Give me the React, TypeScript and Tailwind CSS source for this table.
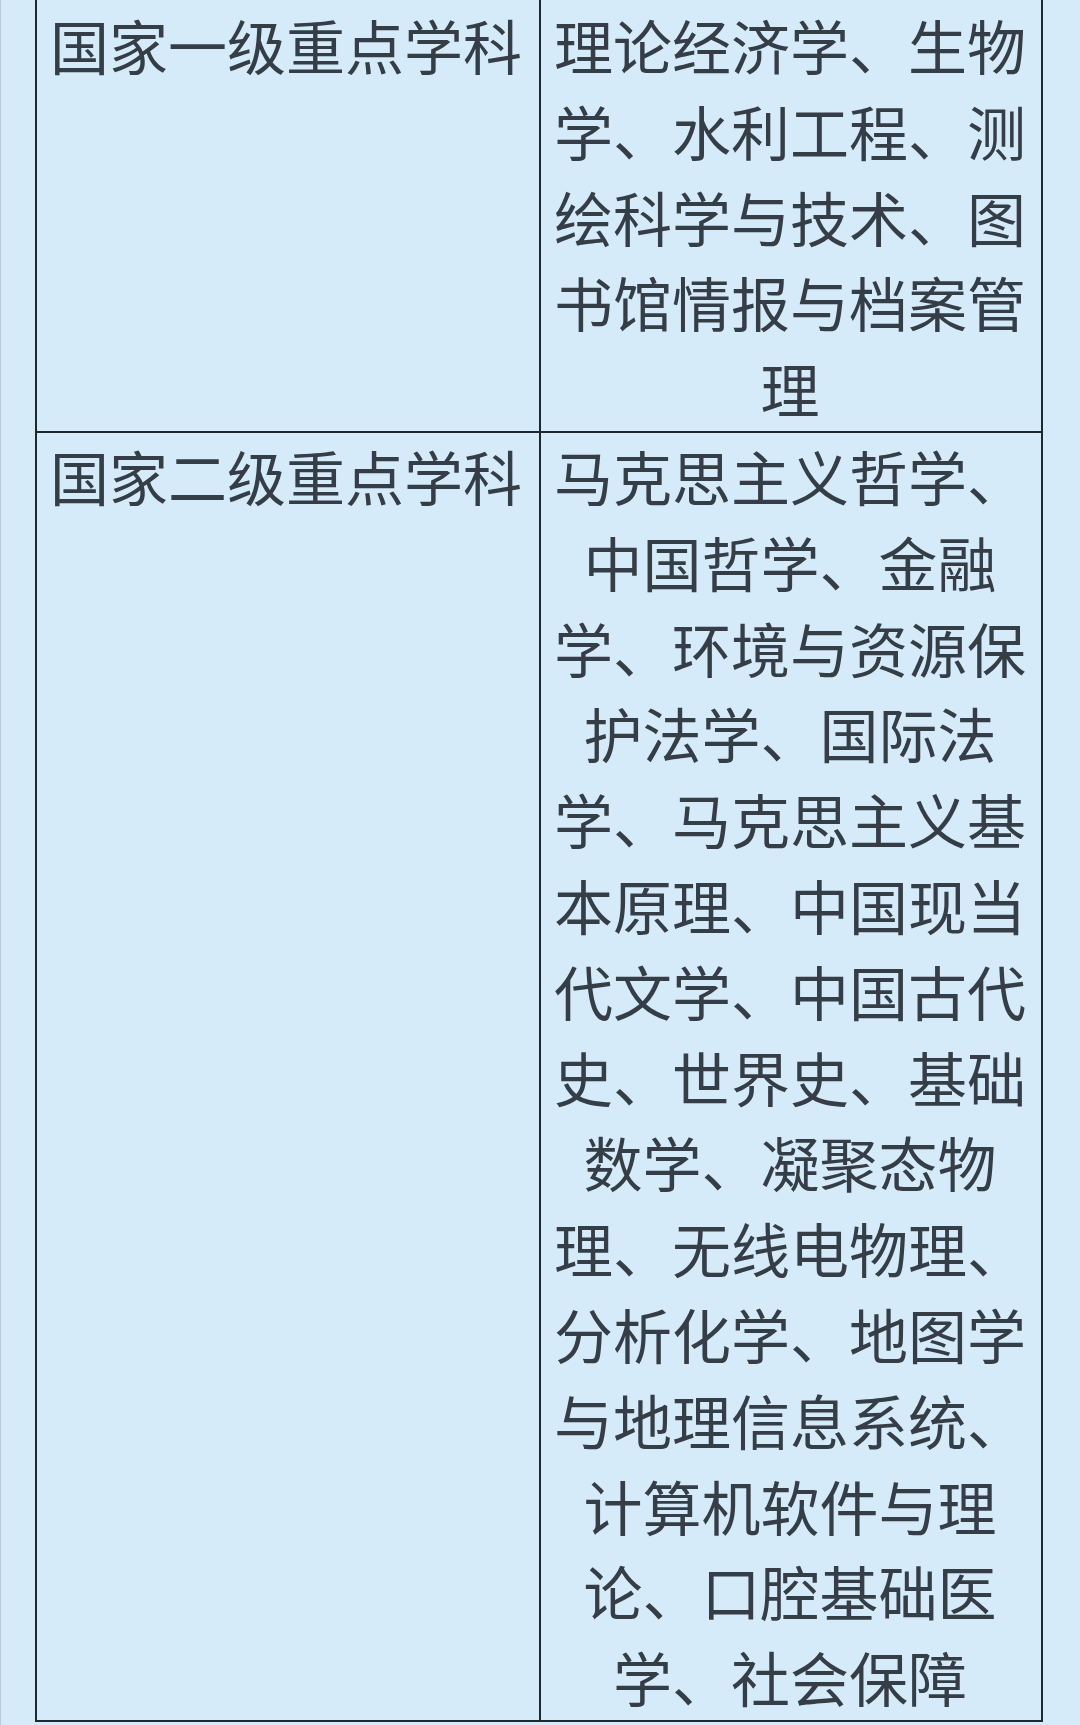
export default function App() {
  const rows = [
    {
      name: "国家一级重点学科",
      items: "理论经济学、生物学、水利工程、测绘科学与技术、图书馆情报与档案管理",
    },
    {
      name: "国家二级重点学科",
      items:
        "马克思主义哲学、中国哲学、金融学、环境与资源保护法学、国际法学、马克思主义基本原理、中国现当代文学、中国古代史、世界史、基础数学、凝聚态物理、无线电物理、分析化学、地图学与地理信息系统、计算机软件与理论、口腔基础医学、社会保障",
    },
  ];

  return (
    <div
      className="w-full h-[1725px] bg-[#d6ebfa] border-l border-[#b9cad8] overflow-hidden"
      style={{ fontFamily: '"Noto Sans CJK SC", "Noto Sans", sans-serif' }}
    >
      <div className="ml-[34px] w-[1008px] border-x-2 border-b-2 border-[#1e2830] text-[59px] leading-[85.8px] text-[#353e46]">
        {rows.map((row, i) => (
          <div
            key={row.name}
            className={`grid grid-cols-[502px_2px_500px] ${i > 0 ? "border-t-2 border-[#1e2830]" : ""}`}
          >
            <div className={`pl-[13px] pr-[10px] whitespace-nowrap ${i === 0 ? "pt-[2px]" : ""}`}>{row.name}</div>
            <div className="bg-[#1e2830]" />
            <div className={`pl-[12px] pr-[14px] text-center ${i === 0 ? "pt-[2px]" : ""}`}>{row.items}</div>
          </div>
        ))}
      </div>
    </div>
  );
}
